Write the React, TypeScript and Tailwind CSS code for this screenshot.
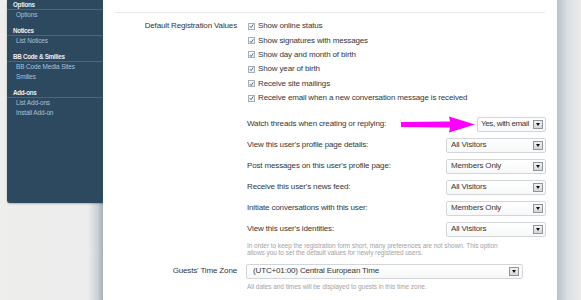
const sections = [
  { title: "Options", links: ["Options"] },
  { title: "Notices", links: ["List Notices"] },
  { title: "BB Code & Smilies", links: ["BB Code Media Sites", "Smilies"] },
  { title: "Add-ons", links: ["List Add-ons", "Install Add-on"] },
];

const checks = [
  "Show online status",
  "Show signatures with messages",
  "Show day and month of birth",
  "Show year of birth",
  "Receive site mailings",
  "Receive email when a new conversation message is received",
];

const privacy = [
  { label: "View this user's profile page details:", value: "All Visitors" },
  { label: "Post messages on this user's profile page:", value: "Members Only" },
  { label: "Receive this user's news feed:", value: "All Visitors" },
  { label: "Initiate conversations with this user:", value: "Members Only" },
  { label: "View this user's identities:", value: "All Visitors" },
];

function Checkbox() {
  return (
    <span className="ml-[1px] mr-[3px] flex h-[7px] w-[7px] shrink-0 items-center justify-center border border-[#a9aeb3] bg-[linear-gradient(#ffffff,#e9ecef)]">
      <svg width="6" height="6" viewBox="0 0 6 6">
        <path d="M1 3.2 L2.5 4.8 L5.2 1" fill="none" stroke="#2f64a8" strokeWidth="1.1" />
      </svg>
    </span>
  );
}

function Select({ value, className }: { value: string; className: string }) {
  return (
    <div
      className={
        "flex h-[15px] shrink-0 items-center justify-between rounded-[2px] border border-[#d3d6d9] bg-[linear-gradient(#ffffff,#f7f8f9)] pr-[2px] " +
        className
      }
    >
      <span className="whitespace-nowrap leading-none">{value}</span>
      <span className="flex h-[9px] w-[10px] shrink-0 items-center justify-center border border-[#8f959a] bg-[linear-gradient(#f2f2f2,#d4d7da)]">
        <span className="h-0 w-0 border-x-[2.5px] border-t-[3px] border-x-transparent border-t-[#111]" />
      </span>
    </div>
  );
}

function Arrow() {
  return (
    <svg width="74" height="17" viewBox="0 0 74 17" className="mr-[2px] shrink-0">
      <path d="M0 6 L49 5.5 L48 0.5 L74 8.5 L48 16.5 L49 11.5 L0 11 Z" fill="#ff00ff" />
    </svg>
  );
}

export default function App() {
  return (
    <div className="flex h-[300px] w-[581px] overflow-hidden bg-[#eeeeec] font-['Liberation_Sans',Arial,sans-serif] text-[8px] tracking-[-0.15px] text-[#363636]">
      <div className="w-[103px] shrink-0 bg-[linear-gradient(to_right,#eeeeec_0px,#eceded_88px,#cdd3d8_97px,#a6b0ba_103px)]">
        <aside className="ml-[7px] h-[203px] w-[96px] rounded-bl-[3px] bg-[#2d4960] shadow-[0_1px_2px_rgba(0,0,0,0.25)]">
          {sections.map((s) => (
            <div key={s.title} className="pb-[6px]">
              <div className="h-[10px] border-b border-[#386b93] pl-[6px] text-[6.3px] font-bold leading-[9px] tracking-[-0.3px] text-[#e9eff4]">
                {s.title}
              </div>
              {s.links.map((l) => (
                <div key={l} className="h-[10px] pl-[9px] text-[6.4px] leading-[10px] tracking-[-0.1px] text-[#a9c2d8]">
                  {l}
                </div>
              ))}
            </div>
          ))}
        </aside>
      </div>

      <main className="w-[454px] shrink-0 bg-white">
        <div className="mx-[12px] mt-[12px] border-t border-[#e6ebef]" />

        <div className="mt-[6px] flex">
          <div className="flex h-[14.4px] w-[134px] shrink-0 items-center justify-end">
            Default Registration Values
          </div>
          <div className="ml-[10px] w-[299px]">
            {checks.map((c) => (
              <div key={c} className="flex h-[14.4px] items-center">
                <Checkbox />
                <span>{c}</span>
              </div>
            ))}

            <div className="mt-[11.6px] flex h-[15px] items-center">
              <span className="flex-1">Watch threads when creating or replying:</span>
              <Arrow />
              <Select value="Yes, with email" className="w-[69px] pl-[3px] tracking-[-0.35px]" />
            </div>
            {privacy.map((p) => (
              <div key={p.label} className="mt-[6px] flex h-[15px] items-center justify-between">
                <span>{p.label}</span>
                <Select value={p.value} className="w-[100px] pl-[4px]" />
              </div>
            ))}

            <p className="mt-[5px] text-[6.5px] leading-[7px] tracking-[-0.05px] text-[#a3a3a3]">
              In order to keep the registration form short, many preferences are not shown. This option
              <br />
              allows you to set the default values for newly registered users.
            </p>
          </div>
        </div>

        <div className="mt-[8px] flex items-center">
          <div className="w-[134px] shrink-0 text-right">Guests' Time Zone</div>
          <div className="ml-[9px]">
            <Select value="(UTC+01:00) Central European Time" className="w-[277px] pl-[6px] pr-[3px]" />
          </div>
        </div>
        <p className="ml-[144px] mt-[4px] text-[6.5px] leading-[8px] tracking-[-0.05px] text-[#a3a3a3]">
          All dates and times will be displayed to guests in this time zone.
        </p>
      </main>

      <div className="flex-1 bg-[linear-gradient(to_right,#b7c1cb,#dce0e4_45%,#ebebeb)]" />
    </div>
  );
}
